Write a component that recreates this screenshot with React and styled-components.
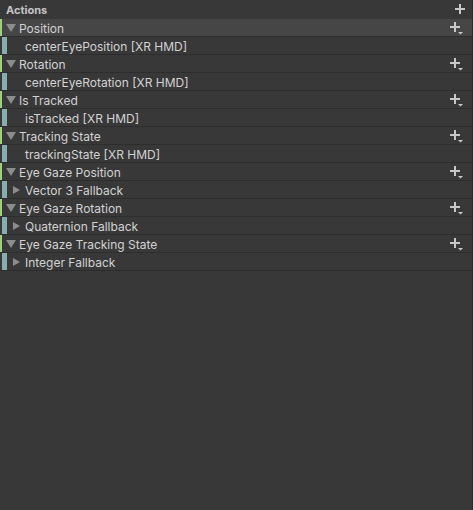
import React from 'react'
import styled, { createGlobalStyle } from 'styled-components'

const Global = createGlobalStyle`
  html, body { margin: 0; padding: 0; background: #383838; }
  body { font-family: Inter, "Noto Sans", sans-serif; }
`

const Panel = styled.div`
  width: 473px;
  height: 510px;
  background: #383838;
  box-sizing: border-box;
  border-right: 1px solid #2a2a2a;
  color: #c4c4c4;
  overflow: hidden;
`

const Header = styled.div`
  height: 19px;
  display: flex;
  align-items: center;
  justify-content: space-between;
  padding: 0 7px 0 6px;
  font-size: 11px;
  font-weight: 700;
  color: #c4c4c4;
  box-sizing: border-box;
`

const Row = styled.div`
  height: 18px;
  box-sizing: border-box;
  border-bottom: 1px solid #2d2d2d;
  display: flex;
  align-items: center;
  background: ${p => (p.selected ? '#464646' : '#383838')};
  font-size: 12px;
  color: #d2d2d2;
  position: relative;
`

const Strip = styled.div`
  align-self: stretch;
  width: ${p => (p.binding ? '5px' : '2px')};
  margin-left: ${p => (p.binding ? '2px' : '0')};
  background: ${p => (p.binding ? '#86aeae' : '#9bd27a')};
  flex-shrink: 0;
`

const Arrow = styled.span`
  width: 0;
  height: 0;
  flex-shrink: 0;
  ${p =>
    p.down
      ? `border-left: 5px solid transparent;
         border-right: 5px solid transparent;
         border-top: 8px solid #8c8c8c;
         margin: 1px 3px 0 4px;`
      : `border-top: 4.5px solid transparent;
         border-bottom: 4.5px solid transparent;
         border-left: 7px solid #8c8c8c;
         margin: 0 5px 0 6px;`}
`

const Label = styled.span`
  padding-left: ${p => p.indent || 0}px;
  padding-top: 2px;
  white-space: nowrap;
  line-height: 17px;
`

const AddButton = styled.div`
  position: absolute;
  right: 10px;
  top: 3px;
  width: 12px;
  height: 12px;
`

const PlusIcon = ({ drop }) => (
  <svg width="13" height="13" viewBox="0 0 13 13">
    <rect x="4" y="0" width="2" height="10" fill="#c8c8c8" />
    <rect x="0" y="4" width="10" height="2" fill="#c8c8c8" />
    {drop && <polygon points="8,10 13,10 10.5,12.5" fill="#c8c8c8" />}
  </svg>
)

const actions = [
  { name: 'Position', binding: 'centerEyePosition [XR HMD]', selected: true },
  { name: 'Rotation', binding: 'centerEyeRotation [XR HMD]' },
  { name: 'Is Tracked', binding: 'isTracked [XR HMD]' },
  { name: 'Tracking State', binding: 'trackingState [XR HMD]' },
  { name: 'Eye Gaze Position', binding: 'Vector 3 Fallback', composite: true },
  { name: 'Eye Gaze Rotation', binding: 'Quaternion Fallback', composite: true },
  { name: 'Eye Gaze Tracking State', binding: 'Integer Fallback', composite: true },
]

export default function App() {
  return (
    <Panel>
      <Global />
      <Header>
        <span>Actions</span>
        <svg width="10" height="10" viewBox="0 0 10 10" style={{ marginTop: '-1px' }}>
          <rect x="4" y="0" width="2" height="10" fill="#c8c8c8" />
          <rect x="0" y="4" width="10" height="2" fill="#c8c8c8" />
        </svg>
      </Header>
      {actions.map(a => (
        <React.Fragment key={a.name}>
          <Row selected={a.selected}>
            <Strip />
            <Arrow down />
            <Label>{a.name}</Label>
            <AddButton>
              <PlusIcon drop />
            </AddButton>
          </Row>
          <Row>
            <Strip binding />
            {a.composite ? (
              <>
                <Arrow />
                <Label>{a.binding}</Label>
              </>
            ) : (
              <Label indent={18}>{a.binding}</Label>
            )}
          </Row>
        </React.Fragment>
      ))}
    </Panel>
  )
}
